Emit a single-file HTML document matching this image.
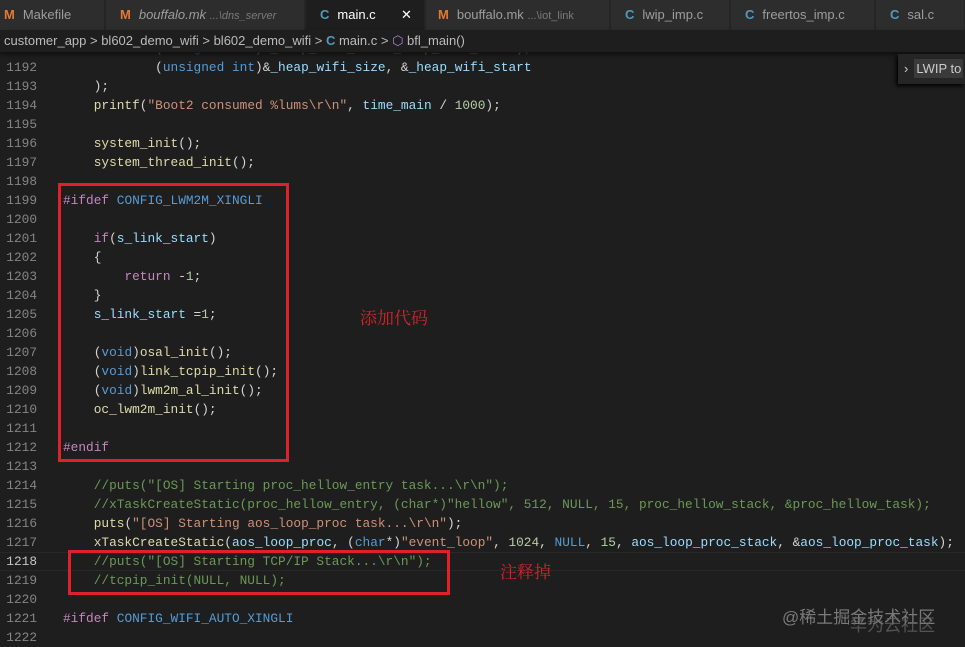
<!DOCTYPE html>
<html><head><meta charset="utf-8"><style>
body{margin:0;width:965px;height:645px;background:#1e1e1e;overflow:hidden;position:relative;font-family:"Liberation Sans",sans-serif}
.tabs{position:absolute;left:0;top:0;width:965px;height:30px;background:#252526}
.tab{position:absolute;top:0;height:30px;background:#2d2d2d;color:#9d9d9d;font-size:13px;line-height:30px;border-right:1px solid #252526;box-sizing:border-box;padding-left:4px;white-space:nowrap;overflow:hidden}
.tab.act{background:#1e1e1e;color:#fff}
.m{color:#e37933;font-weight:bold;margin-right:8px}
.c{color:#519aba;font-weight:bold;margin-right:8px}
.dim{font-size:11px;color:#7a7a7a}
.bc{position:absolute;left:0;top:30px;height:22px;width:965px;color:#bbb;font-size:13px;line-height:22px;padding-left:4px;box-shadow:0 3px 4px #111;z-index:2;background:#1e1e1e}
.code{position:absolute;left:0;top:1px;font-family:"Liberation Mono",monospace;font-size:12.8px}
.l{position:absolute;left:0;height:19px;line-height:19px;white-space:pre;width:965px}
.n{position:absolute;right:928px;color:#858585;text-align:right}
.t{position:absolute;left:63px;color:#d4d4d4}
.k{color:#569cd6}.p{color:#c586c0}.f{color:#dcdcaa}.s{color:#ce9178}.v{color:#9cdcfe}.d{color:#b5cea8}.cm{color:#6a9955}.mc{color:#569cd6}
.box{position:absolute;border:3px solid #e0202a;box-sizing:border-box}
.note{position:absolute;color:#d0262a;font-family:"Noto Serif CJK SC",serif;font-size:17px}
</style></head><body>
<div class="tabs">
<div class="tab" style="left:0;width:105px"><span class="m">M</span>Makefile</div>
<div class="tab" style="left:106px;width:199px;padding-left:14px"><span class="m">M</span><i>bouffalo.mk</i> <span class="dim"><i>...\dns_server</i></span></div>
<div class="tab act" style="left:306px;width:119px;padding-left:14px"><span class="c">C</span>main.c<span style="position:absolute;left:95px">✕</span></div>
<div class="tab" style="left:426px;width:184px;padding-left:12px"><span class="m">M</span>bouffalo.mk <span class="dim">...\iot_link</span></div>
<div class="tab" style="left:611px;width:119px;padding-left:14px"><span class="c">C</span>lwip_imp.c</div>
<div class="tab" style="left:731px;width:144px;padding-left:14px"><span class="c">C</span>freertos_imp.c</div>
<div class="tab" style="left:876px;width:89px;padding-left:14px"><span class="c">C</span>sal.c</div>
</div>
<div class="bc">customer_app &gt; bl602_demo_wifi &gt; bl602_demo_wifi &gt; <span style="color:#519aba;font-weight:bold">C</span> main.c &gt; <span style="color:#b180d7">⬡</span> bfl_main()</div>
<div style="position:absolute;left:898px;top:54px;width:67px;height:30px;background:#252526;box-shadow:-2px 2px 4px #000;z-index:3;color:#ccc;font-size:13px;line-height:30px"><span style="margin:0 6px">›</span><span style="background:#3a3a3a;padding:2px 2px">LWIP to</span></div>
<div class="code">
<div class="l" style="top:38px"><span class="n">1191</span><span class="t">            (<span class="k">unsigned</span> <span class="k">int</span>)&amp;<span class="v">_heap_wifi_end</span>-&amp;<span class="v">_heap_wifi_start</span>);</span></div>
<div class="l" style="top:57px"><span class="n">1192</span><span class="t">            (<span class="k">unsigned</span> <span class="k">int</span>)&amp;<span class="v">_heap_wifi_size</span>, &amp;<span class="v">_heap_wifi_start</span></span></div>
<div class="l" style="top:76px"><span class="n">1193</span><span class="t">    );</span></div>
<div class="l" style="top:95px"><span class="n">1194</span><span class="t">    <span class="f">printf</span>(<span class="s">"Boot2 consumed %lums</span><span class="s">\r\n"</span>, <span class="v">time_main</span> / <span class="d">1000</span>);</span></div>
<div class="l" style="top:114px"><span class="n">1195</span></div>
<div class="l" style="top:133px"><span class="n">1196</span><span class="t">    <span class="f">system_init</span>();</span></div>
<div class="l" style="top:152px"><span class="n">1197</span><span class="t">    <span class="f">system_thread_init</span>();</span></div>
<div class="l" style="top:171px"><span class="n">1198</span></div>
<div class="l" style="top:190px"><span class="n">1199</span><span class="t"><span class="p">#ifdef</span> <span class="mc">CONFIG_LWM2M_XINGLI</span></span></div>
<div class="l" style="top:209px"><span class="n">1200</span></div>
<div class="l" style="top:228px"><span class="n">1201</span><span class="t">    <span class="p">if</span>(<span class="v">s_link_start</span>)</span></div>
<div class="l" style="top:247px"><span class="n">1202</span><span class="t">    {</span></div>
<div class="l" style="top:266px"><span class="n">1203</span><span class="t">        <span class="p">return</span> -<span class="d">1</span>;</span></div>
<div class="l" style="top:285px"><span class="n">1204</span><span class="t">    }</span></div>
<div class="l" style="top:304px"><span class="n">1205</span><span class="t">    <span class="v">s_link_start</span> =<span class="d">1</span>;</span></div>
<div class="l" style="top:323px"><span class="n">1206</span></div>
<div class="l" style="top:342px"><span class="n">1207</span><span class="t">    (<span class="k">void</span>)<span class="f">osal_init</span>();</span></div>
<div class="l" style="top:361px"><span class="n">1208</span><span class="t">    (<span class="k">void</span>)<span class="f">link_tcpip_init</span>();</span></div>
<div class="l" style="top:380px"><span class="n">1209</span><span class="t">    (<span class="k">void</span>)<span class="f">lwm2m_al_init</span>();</span></div>
<div class="l" style="top:399px"><span class="n">1210</span><span class="t">    <span class="f">oc_lwm2m_init</span>();</span></div>
<div class="l" style="top:418px"><span class="n">1211</span></div>
<div class="l" style="top:437px"><span class="n">1212</span><span class="t"><span class="p">#endif</span></span></div>
<div class="l" style="top:456px"><span class="n">1213</span></div>
<div class="l" style="top:475px"><span class="n">1214</span><span class="t cm">    //puts("[OS] Starting proc_hellow_entry task...\r\n");</span></div>
<div class="l" style="top:494px"><span class="n">1215</span><span class="t cm">    //xTaskCreateStatic(proc_hellow_entry, (char*)"hellow", 512, NULL, 15, proc_hellow_stack, &amp;proc_hellow_task);</span></div>
<div class="l" style="top:513px"><span class="n">1216</span><span class="t">    <span class="f">puts</span>(<span class="s">"[OS] Starting aos_loop_proc task...\r\n"</span>);</span></div>
<div class="l" style="top:532px"><span class="n">1217</span><span class="t">    <span class="f">xTaskCreateStatic</span>(<span class="v">aos_loop_proc</span>, (<span class="k">char</span>*)<span class="s">"event_loop"</span>, <span class="d">1024</span>, <span class="k">NULL</span>, <span class="d">15</span>, <span class="v">aos_loop_proc_stack</span>, &amp;<span class="v">aos_loop_proc_task</span>);</span></div>
<div class="l" style="top:551px;border-top:1px solid #282828;border-bottom:1px solid #282828;height:17px;line-height:17px"><span class="n" style="color:#c6c6c6">1218</span><span class="t cm">    //puts("[OS] Starting TCP/IP Stack...\r\n");</span></div>
<div class="l" style="top:570px"><span class="n">1219</span><span class="t cm">    //tcpip_init(NULL, NULL);</span></div>
<div class="l" style="top:589px"><span class="n">1220</span></div>
<div class="l" style="top:608px"><span class="n">1221</span><span class="t"><span class="p">#ifdef</span> <span class="mc">CONFIG_WIFI_AUTO_XINGLI</span></span></div>
<div class="l" style="top:627px"><span class="n">1222</span></div>
</div>
<div class="box" style="left:58px;top:183px;width:231px;height:279px"></div>
<div class="box" style="left:68px;top:550px;width:382px;height:45px"></div>
<div class="note" style="left:360px;top:304px">添加代码</div>
<div class="note" style="left:500px;top:558px">注释掉</div>
<div style="position:absolute;left:782px;top:603px;color:#7a7a7a;font-family:'Liberation Sans','Noto Sans CJK SC',sans-serif;font-size:17px">@稀土掘金技术社区</div>
<div style="position:absolute;left:850px;top:611px;color:#6a6a6a;font-family:'Noto Sans CJK SC',sans-serif;font-size:17px;opacity:.7">华为云社区</div>
</body></html>
